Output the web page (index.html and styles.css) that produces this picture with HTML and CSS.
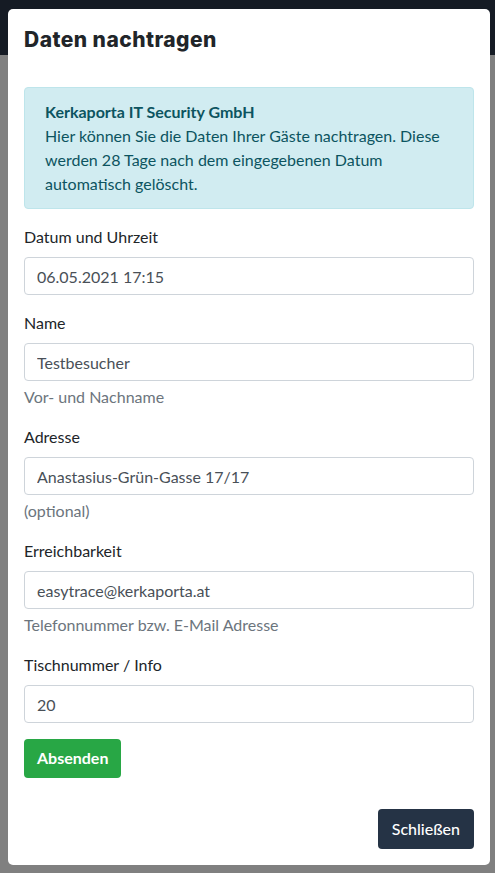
FILE: index.html
```html
<!DOCTYPE html>
<html lang="de">
<head>
<meta charset="utf-8">
<title>Daten nachtragen</title>
<link rel="stylesheet" href="styles.css">
</head>
<body>
<div class="page">
  <div class="topbar"></div>
</div>
<div class="modal">
  <div class="modal-header">
    <h5 class="modal-title">Daten nachtragen</h5>
  </div>
  <div class="modal-body">
    <div class="alert">
      <strong>Kerkaporta IT Security GmbH</strong><br>
      Hier können Sie die Daten Ihrer Gäste nachtragen. Diese werden 28 Tage nach dem eingegebenen Datum automatisch gelöscht.
    </div>
    <form class="form">
      <div class="group">
        <label class="label">Datum und Uhrzeit</label>
        <input class="input" type="text" value="06.05.2021 17:15">
      </div>
      <div class="group">
        <label class="label">Name</label>
        <input class="input" type="text" value="Testbesucher">
        <small class="hint">Vor- und Nachname</small>
      </div>
      <div class="group">
        <label class="label">Adresse</label>
        <input class="input" type="text" value="Anastasius-Grün-Gasse 17/17">
        <small class="hint">(optional)</small>
      </div>
      <div class="group">
        <label class="label">Erreichbarkeit</label>
        <input class="input" type="text" value="easytrace@kerkaporta.at">
        <small class="hint">Telefonnummer bzw. E-Mail Adresse</small>
      </div>
      <div class="group">
        <label class="label">Tischnummer / Info</label>
        <input class="input" type="text" value="20">
      </div>
      <div class="actions">
        <button type="button" class="btn btn-success">Absenden</button>
      </div>
    </form>
  </div>
  <div class="modal-footer">
    <button type="button" class="btn btn-dark">Schließen</button>
  </div>
</div>
</body>
</html>
```
FILE: styles.css
```css
* { box-sizing: border-box; }
html, body { margin: 0; padding: 0; }
body {
  background: #808080;
  font-family: Lato, "Open Sans", sans-serif;
  font-size: 16px;
  line-height: 24px;
  color: #212529;
  width: 495px;
  height: 873px;
  overflow: hidden;
}
.page { height: 873px; }
.topbar { height: 55px; background: #151b24; }
.modal {
  position: absolute;
  top: 9px;
  left: 8px;
  width: 482px;
  background: #fff;
  border-radius: 5px;
}
.modal-header { padding: 16px; }
.modal-title {
  margin: 0;
  font-family: Inter, "Noto Sans", sans-serif;
  font-weight: 800;
  font-size: 21px;
  line-height: 30px;
  color: #212529;
  letter-spacing: 0.45px;
}
.modal-body { padding: 16px; }
.alert {
  background: #d1ecf1;
  border: 1px solid #bee5eb;
  color: #0c5460;
  border-radius: 4px;
  padding: 12px 20px;
  margin-bottom: 16px;
}
.alert strong { font-weight: 700; }
.form { display: flex; flex-direction: column; gap: 16px; }
.group { display: flex; flex-direction: column; }
.label { display: block; margin-bottom: 8px; }
.input {
  display: block;
  width: 100%;
  height: 38px;
  padding: 6px 12px;
  font-family: Lato, "Open Sans", sans-serif;
  font-size: 16px;
  line-height: 24px;
  color: #495057;
  background: #fff;
  border: 1px solid #ced4da;
  border-radius: 4px;
}
.hint {
  display: block;
  margin-top: 4px;
  font-size: 16px;
  color: #6c757d;
}
.actions { display: flex; }
.btn {
  font-family: Lato, "Open Sans", sans-serif;
  font-size: 16px;
  line-height: 24px;
  padding: 7px 13px 8px;
  border: 0;
  border-radius: 4px;
  color: #fff;
}
.btn-success { background: #28a745; font-weight: 700; }
.btn-dark { background: #253345; font-weight: 500; padding: 8px 14px; }
.modal-footer {
  display: flex;
  justify-content: flex-end;
  padding: 11px 12px 12px;
}
.modal-footer .btn { margin: 4px; }
```
